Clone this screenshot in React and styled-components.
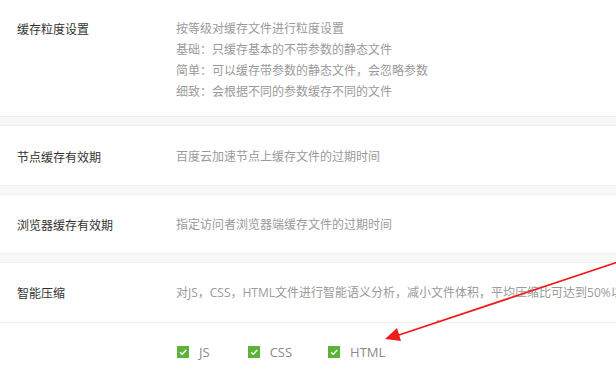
import React from "react";
import styled, { createGlobalStyle } from "styled-components";

const Global = createGlobalStyle`
  html, body { margin: 0; padding: 0; background: #fff; }
  body { font-family: "Open Sans", "Noto Sans CJK SC", sans-serif; }
`;

const Page = styled.div`
  position: relative;
  width: 616px;
  height: 380px;
  overflow: hidden;
  background: #fff;
`;

const Row = styled.div`
  display: flex;
  align-items: ${(p) => (p.$top ? "flex-start" : "center")};
  height: ${(p) => p.$h}px;
  box-sizing: border-box;
  padding-top: ${(p) => (p.$top ? "18px" : "0")};
`;

const Label = styled.div`
  flex: 0 0 159px;
  padding-left: 17px;
  font-family: "Noto Sans CJK SC", sans-serif;
  font-size: 12px;
  line-height: 21px;
  color: #333;
`;

const Desc = styled.div`
  flex: 1;
  min-width: 0;
  font-family: "Open Sans", "Noto Sans CJK SC", sans-serif;
  font-size: 12px;
  line-height: 21px;
  color: #9a9a9a;
  white-space: nowrap;
  overflow: hidden;
`;

const Band = styled.div`
  height: 8px;
  background: #f7f7f7;
  border-top: 1px solid #efefef;
  border-bottom: 1px solid #efefef;
  margin-top: -1px;
`;

const Rule = styled.div`
  height: 1px;
  background: #efefef;
`;

const Options = styled.div`
  display: flex;
  align-items: center;
  height: 57px;
  padding-left: 177px;
`;

const Option = styled.label`
  display: flex;
  align-items: center;
  gap: 10px;
  margin-right: ${(p) => p.$mr}px;
  font-family: "Open Sans", sans-serif;
  font-size: 13px;
  color: #8a8a8a;
`;

const Box = styled.span`
  display: inline-flex;
  align-items: center;
  justify-content: center;
  width: 12px;
  height: 12px;
  background: #5cb33a;
`;

const Arrow = styled.svg`
  position: absolute;
  left: 0;
  top: 0;
  pointer-events: none;
`;

function Check({ label, mr }) {
  return (
    <Option $mr={mr}>
      <Box>
        <svg width="10" height="10" viewBox="0 0 10 10">
          <path d="M2 5.2 L4.2 7.2 L8.2 3" fill="none" stroke="#fff" strokeWidth="1.4" />
        </svg>
      </Box>
      {label}
    </Option>
  );
}

export default function App() {
  return (
    <>
      <Global />
      <Page>
        <Row $h={117} $top>
          <Label>缓存粒度设置</Label>
          <Desc>
            <div>按等级对缓存文件进行粒度设置</div>
            <div>基础：只缓存基本的不带参数的静态文件</div>
            <div>简单：可以缓存带参数的静态文件，会忽略参数</div>
            <div>细致：会根据不同的参数缓存不同的文件</div>
          </Desc>
        </Row>
        <Band />
        <Row $h={60}>
          <Label>节点缓存有效期</Label>
          <Desc>百度云加速节点上缓存文件的过期时间</Desc>
        </Row>
        <Band />
        <Row $h={59}>
          <Label>浏览器缓存有效期</Label>
          <Desc>指定访问者浏览器端缓存文件的过期时间</Desc>
        </Row>
        <Band />
        <Row $h={59}>
          <Label>智能压缩</Label>
          <Desc>对JS，CSS，HTML文件进行智能语义分析，减小文件体积，平均压缩比可达到50%以上</Desc>
        </Row>
        <Rule />
        <Options>
          <Check label="JS" mr={38} />
          <Check label="CSS" mr={36} />
          <Check label="HTML" mr={0} />
        </Options>
        <Arrow width="616" height="380" viewBox="0 0 616 380">
          <line x1="618" y1="262" x2="396" y2="336" stroke="#ee1c1c" strokeWidth="1.8" />
          <polygon points="385,339 397,328 401,341" fill="#ee1c1c" />
          <circle cx="438" cy="321" r="0.8" fill="#ee1c1c" />
        </Arrow>
      </Page>
    </>
  );
}
